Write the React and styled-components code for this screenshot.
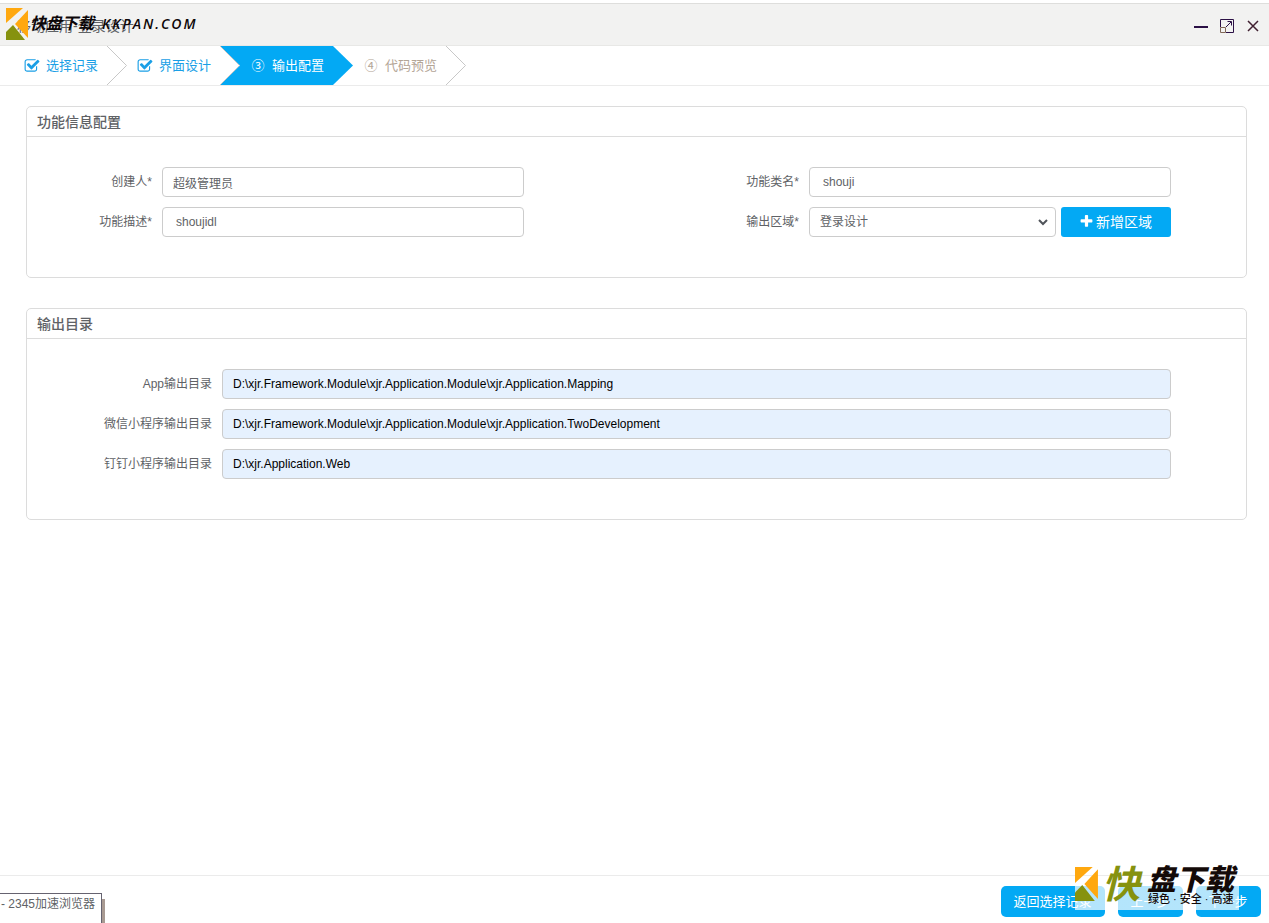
import { useState } from "react";
import styled, { createGlobalStyle } from "styled-components";

const blue = "#03a9f4";
const ink = "#606266";
const line = "#dcdcdc";
const plum = "#2b1045";

const GlobalStyle = createGlobalStyle`
  * {
    box-sizing: border-box;
  }
  body {
    margin: 0;
    background: #fff;
    color: ${ink};
    font: 12px/18px "Liberation Sans", "Noto Sans CJK SC", sans-serif;
  }
  button, input, select {
    font-family: inherit;
  }
`;

const Page = styled.div`
  display: flex;
  flex-direction: column;
  min-height: 100vh;
  padding-top: 3px;
  position: relative;
  overflow: hidden;
`;

const TitleBar = styled.header`
  display: flex;
  align-items: center;
  justify-content: space-between;
  height: 43px;
  padding: 2px 8px 0 17px;
  background: #f2f2f1;
  border-top: 1px solid #dededc;
  border-bottom: 1px solid #e8e8e6;
`;

const Title = styled.h1`
  margin: 0;
  font-size: 14px;
  line-height: 20px;
  font-weight: 400;
`;

const WindowActions = styled.div`
  display: flex;
  gap: 10px;
`;

const WindowButton = styled.button`
  display: flex;
  padding: 0;
  border: 0;
  background: none;
  color: ${plum};
  cursor: pointer;
`;

const Steps = styled.nav`
  display: flex;
  height: 40px;
  padding-left: 14px;
  border-bottom: 1px solid #ebebeb;
`;

const Step = styled.a`
  display: flex;
  align-items: center;
  gap: 7px;
  padding: 0 9px 0 11px;
  font-size: 13px;
  line-height: 20px;
  text-decoration: none;
  white-space: nowrap;
  color: ${({ $state }) =>
    $state === "active" ? "#fff" : $state === "done" ? "#1a9fe6" : "#b3a596"};
  background: ${({ $state }) => ($state === "active" ? blue : "#fff")};
`;

const StepIcon = styled.span`
  display: flex;
  justify-content: center;
  width: 14px;

  svg {
    flex: none;
  }
`;

const Arrow = styled.svg`
  flex: none;
  width: 20px;
  height: 39px;
  background: ${({ $next }) => ($next ? blue : "#fff")};
`;

const Main = styled.main`
  flex: 1;
  display: flex;
  flex-direction: column;
  gap: 30px;
  padding: 20px 22px 20px 26px;
`;

const Panel = styled.section`
  border: 1px solid ${line};
  border-radius: 5px;
`;

const PanelTitle = styled.h2`
  margin: 0;
  padding: 5px 10px 4px;
  border-bottom: 1px solid ${line};
  font-size: 14px;
  line-height: 20px;
  font-weight: 500;
`;

const Fields = styled.div`
  display: grid;
  grid-template-columns: ${({ $columns }) => `repeat(${$columns}, 1fr)`};
  gap: 10px 150px;
  padding: 30px 75px 40px 0;
`;

const FieldRow = styled.div`
  display: flex;
  align-items: center;
  height: 30px;
`;

const Label = styled.label`
  flex: none;
  width: ${({ $wide }) => ($wide ? "195px" : "135px")};
  padding-right: 10px;
  text-align: right;
`;

const Input = styled.input`
  flex: 1;
  min-width: 0;
  height: 30px;
  padding: 0 10px;
  border: 1px solid #ccc;
  border-radius: 4px;
  background: ${({ $filled }) => ($filled ? "#e6f1fe" : "#fff")};
  color: ${({ $filled }) => ($filled ? "#000" : ink)};
  font-size: 12px;
  text-indent: ${({ $indent }) => ($indent ? "3px" : "0")};
`;

const SelectWrap = styled.div`
  flex: 1;
  display: grid;
  align-items: center;
  min-width: 0;
  margin-right: 5px;

  > * {
    grid-area: 1 / 1;
  }
  svg {
    justify-self: end;
    margin-right: 7px;
    pointer-events: none;
  }
`;

const Select = styled.select`
  appearance: none;
  width: 100%;
  height: 30px;
  padding: 0 24px 0 10px;
  border: 1px solid #ccc;
  border-radius: 4px;
  background: #fff;
  color: ${ink};
  font-size: 12px;
`;

const Button = styled.button`
  display: flex;
  align-items: center;
  justify-content: center;
  gap: 2px;
  height: ${({ $small }) => ($small ? "30px" : "31px")};
  padding: 0 1px 2px 0;
  width: ${({ $width }) => $width}px;
  border: 0;
  border-radius: ${({ $small }) => ($small ? "3px" : "5px")};
  background: ${blue};
  color: #fff;
  font-size: ${({ $small }) => ($small ? "14px" : "13px")};
  white-space: nowrap;
  cursor: pointer;
`;

const Footer = styled.footer`
  display: flex;
  justify-content: flex-end;
  gap: 13px;
  height: 48px;
  padding: 10px 8px 0;
  border-top: 1px solid #ebebeb;
`;

// stamps that float over the window
const TopStamp = styled.div`
  position: absolute;
  top: 7px;
  left: 6px;
  display: flex;
  align-items: center;
  color: #0c0608;
  font-style: italic;
  line-height: 32px;
  white-space: nowrap;
  pointer-events: none;
`;

const StampName = styled.span`
  margin: 0 8px 0 1px;
  font-size: 16px;
  font-weight: 700;
`;

const StampSite = styled.span`
  font-family: "Open Sans", sans-serif;
  font-size: 14px;
  font-weight: 600;
  letter-spacing: 2px;
  line-height: 34px;
`;

const BottomStamp = styled.div`
  position: absolute;
  right: 30px;
  bottom: 13px;
  display: flex;
  height: 43px;
  width: 164px;
  color: #140a08;
  pointer-events: none;
  background: linear-gradient(transparent 19px, rgba(255, 255, 255, 0.7) 19px);
`;

const StampFirst = styled.span`
  margin-left: 3px;
  color: #86920f;
  font-size: 38px;
  line-height: 36px;
  font-weight: 700;
  font-style: italic;
`;

const StampText = styled.div`
  display: flex;
  flex-direction: column;
  margin-left: 4px;
  white-space: nowrap;
`;

const StampRest = styled.span`
  margin-left: 3px;
  font-size: 29px;
  line-height: 26px;
  font-weight: 900;
  font-style: italic;
`;

const StampSlogan = styled.span`
  margin-left: 4px;
  font-size: 11px;
  line-height: 12px;
  font-weight: 500;
`;

const BrowserTip = styled.div`
  position: absolute;
  left: -1px;
  bottom: 0;
  height: 30px;
  padding: 1px 6px 0 1px;
  border: 1px solid #666370;
  border-bottom: 0;
  background: #fff;
  box-shadow: 3px 6px 0 #a89a92;
  line-height: 18px;
  white-space: nowrap;
`;

const CheckIcon = () => (
  <svg width="16" height="16" viewBox="0 0 1792 1792" fill="currentColor">
    <path d="M1472 930v318q0 119-84.500 203.500t-203.500 84.500h-832q-119 0-203.500-84.500t-84.500-203.500v-832q0-119 84.500-203.500t203.500-84.500h832q63 0 117 25 15 7 18 23 3 17-9 29l-49 49q-10 10-23 10-3 0-9-2-23-6-45-6h-832q-66 0-113 47t-47 113v832q0 66 47 113t113 47h832q66 0 113-47t47-113v-254q0-13 9-22l64-64q10-10 23-10 6 0 12 3 20 8 20 29zm231-489l-814 814q-24 24-57 24t-57-24l-430-430q-24-24-24-57t24-57l110-110q24-24 57-24t57 24l263 263 647-647q24-24 57-24t57 24l110 110q24 24 24 57t-24 57z" />
  </svg>
);

const PlusIcon = () => (
  <svg width="15" height="15" viewBox="0 0 1792 1792" fill="currentColor">
    <path d="M1600 736v192q0 40-28 68t-68 28h-416v416q0 40-28 68t-68 28h-192q-40 0-68-28t-28-68v-416h-416q-40 0-68-28t-28-68v-192q0-40 28-68t68-28h416v-416q0-40 28-68t68-28h192q40 0 68 28t28 68v416h416q40 0 68 28t28 68z" />
  </svg>
);

const Logo = ({ width, height }) => (
  <svg width={width} height={height} viewBox="0 0 23 32" preserveAspectRatio="none">
    <path d="M0 0H17L0 15Z" fill="#ffa80f" />
    <path d="M22 2V30L9 16Z" fill="#ffa80f" />
    <path d="M0 32V24L7 17L19 32Z" fill="#86920f" />
  </svg>
);

const steps = [
  { name: "选择记录", state: "done" },
  { name: "界面设计", state: "done" },
  { name: "输出配置", state: "active", mark: "③" },
  { name: "代码预览", state: "todo", mark: "④" },
];

const folders = [
  {
    id: "app",
    name: "App输出目录",
    path: "D:\\xjr.Framework.Module\\xjr.Application.Module\\xjr.Application.Mapping",
  },
  {
    id: "wechat",
    name: "微信小程序输出目录",
    path: "D:\\xjr.Framework.Module\\xjr.Application.Module\\xjr.Application.TwoDevelopment",
  },
  { id: "ding", name: "钉钉小程序输出目录", path: "D:\\xjr.Application.Web" },
];

const StepArrow = ({ active, next }) => (
  <Arrow $next={next} viewBox="0 0 20 39">
    <path d="M0 0L20 19.500L0 39Z" fill={active ? blue : "#fff"} />
    {!active && <path d="M0 0L19.500 19.500L0 39" fill="none" stroke="#c8c8c8" />}
  </Arrow>
);

const TextField = ({ id, label, value, indent, wide, filled }) => {
  const [text, setText] = useState(value);
  return (
    <FieldRow>
      <Label htmlFor={id} $wide={wide}>
        {label}
      </Label>
      <Input
        id={id}
        value={text}
        onChange={(e) => setText(e.target.value)}
        $indent={indent}
        $filled={filled}
      />
    </FieldRow>
  );
};

export default () => {
  return (
    <>
      <GlobalStyle />
      <Page>
        <TitleBar>
          <Title>移动应用-登录设计</Title>
          <WindowActions>
            <WindowButton aria-label="最小化">
              <svg width="16" height="16" viewBox="0 0 16 16">
                <path d="M1 9H15" stroke="currentColor" strokeWidth="2" />
              </svg>
            </WindowButton>
            <WindowButton aria-label="最大化">
              <svg width="16" height="16" viewBox="0 0 16 16" fill="none" stroke="currentColor">
                <path d="M1.500 9V1.500H14.500V14.500H7" />
                <path d="M1.500 9.500H6.500V14.500H1.500Z" stroke="#806858" />
                <path d="M7 9L12 4M8.500 3.500H12.500V7.500" />
              </svg>
            </WindowButton>
            <WindowButton aria-label="关闭">
              <svg width="16" height="16" viewBox="0 0 16 16">
                <path d="M3 3L13 13M13 3L3 13" stroke="#402030" strokeWidth="1.500" />
              </svg>
            </WindowButton>
          </WindowActions>
        </TitleBar>
        <Steps>
          {steps.map(({ name, state, mark }, i) => [
            <Step key={name} href="#" $state={state}>
              <StepIcon>{mark || <CheckIcon />}</StepIcon>
              {name}
            </Step>,
            <StepArrow
              key={`${name}-arrow`}
              active={state === "active"}
              next={steps[i + 1]?.state === "active"}
            />,
          ])}
        </Steps>
        <Main>
          <Panel>
            <PanelTitle>功能信息配置</PanelTitle>
            <Fields $columns={2}>
              <TextField id="creator" label="创建人*" value="超级管理员" />
              <TextField id="className" label="功能类名*" value="shouji" indent />
              <TextField id="description" label="功能描述*" value="shoujidl" indent />
              <FieldRow>
                <Label htmlFor="area">输出区域*</Label>
                <SelectWrap>
                  <Select id="area">
                    <option>登录设计</option>
                  </Select>
                  <svg width="12" height="12" viewBox="0 0 12 12">
                    <path d="M2 4L6 8L10 4" fill="none" stroke="#50545a" strokeWidth="2" />
                  </svg>
                </SelectWrap>
                <Button $small $width={110}>
                  <PlusIcon />
                  新增区域
                </Button>
              </FieldRow>
            </Fields>
          </Panel>
          <Panel>
            <PanelTitle>输出目录</PanelTitle>
            <Fields $columns={1}>
              {folders.map(({ id, name, path }) => (
                <TextField key={id} id={id} label={name} value={path} wide filled />
              ))}
            </Fields>
          </Panel>
        </Main>
        <Footer>
          <Button $width={104}>返回选择记录</Button>
          <Button $width={65}>上一步</Button>
          <Button $width={65}>下一步</Button>
        </Footer>
        <TopStamp>
          <Logo width={23} height={32} />
          <StampName>快盘下载</StampName>
          <StampSite>KKPAN.COM</StampSite>
        </TopStamp>
        <BottomStamp>
          <Logo width={24} height={34} />
          <StampFirst>快</StampFirst>
          <StampText>
            <StampRest>盘下载</StampRest>
            <StampSlogan>绿色 · 安全 · 高速</StampSlogan>
          </StampText>
        </BottomStamp>
        <BrowserTip>- 2345加速浏览器</BrowserTip>
      </Page>
    </>
  );
};
